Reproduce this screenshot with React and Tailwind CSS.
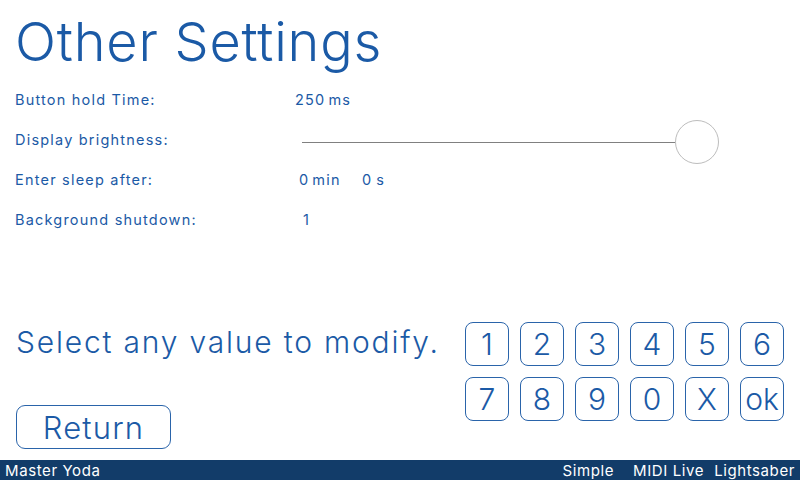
import React from "react";

const keys = ["1", "2", "3", "4", "5", "6", "7", "8", "9", "0", "X", "ok"];

export default function App() {
  return (
    <div
      className="w-[800px] h-[480px] bg-white flex flex-col overflow-hidden text-[#1b5aa6]"
      style={{ fontFamily: "Inter, 'Liberation Sans', sans-serif" }}
    >
      <div className="flex-1 flex flex-col px-[15px]">
        <h1 className="pt-[10px] text-[54px] leading-[64px] font-light tracking-[0.8px]">
          Other Settings
        </h1>
        <div className="mt-[6px] flex flex-col text-[14.5px] tracking-[1.2px]">
          <div className="h-10 flex items-center">
            <span className="w-[280px]">Button hold Time:</span>
            <span>
              250<span className="ml-[3px]">ms</span>
            </span>
          </div>
          <div className="h-10 flex items-center">
            <span className="w-[287px]">Display brightness:</span>
            <div className="flex items-center mt-[4px]">
              <div className="w-[373px] h-px bg-[#808080]" />
              <div className="w-[44px] h-[44px] rounded-full border border-[#bdbdbd] bg-white" />
            </div>
          </div>
          <div className="h-10 flex items-center">
            <span className="w-[284px]">Enter sleep after:</span>
            <span className="w-[63px]">
              0<span className="ml-[3px]">min</span>
            </span>
            <span>
              0<span className="ml-[4px]">s</span>
            </span>
          </div>
          <div className="h-10 flex items-center">
            <span className="w-[288px]">Background shutdown:</span>
            <span>1</span>
          </div>
        </div>
        <div className="mt-auto mb-[11px] flex items-start">
          <div className="flex-1 flex flex-col">
            <div className="h-[44px] pb-[3px] flex items-center text-[30px] font-light tracking-[1.8px] pl-px">
              Select any value to modify.
            </div>
            <button className="mt-[39px] w-[155px] h-[44px] ml-px rounded-[9px] border border-[#2a64aa] text-[31px] font-light tracking-[1.2px] flex items-center justify-center leading-none">
              Return
            </button>
          </div>
          <div className="grid grid-cols-6 gap-[11px] mr-px">
            {keys.map((k) => (
              <div
                key={k}
                className="w-[44px] h-[44px] rounded-[8px] border border-[#2a64aa] flex items-center justify-center text-[30px] font-light leading-none"
              >
                {k}
              </div>
            ))}
          </div>
        </div>
      </div>
      <div className="h-5 bg-[#123c69] text-white text-[15px] tracking-[0.6px] flex items-center px-[5px] leading-none">
        <span>Master Yoda</span>
        <span className="ml-auto">Simple</span>
        <span className="ml-[19px]">MIDI Live</span>
        <span className="ml-[10px]">Lightsaber</span>
      </div>
    </div>
  );
}
